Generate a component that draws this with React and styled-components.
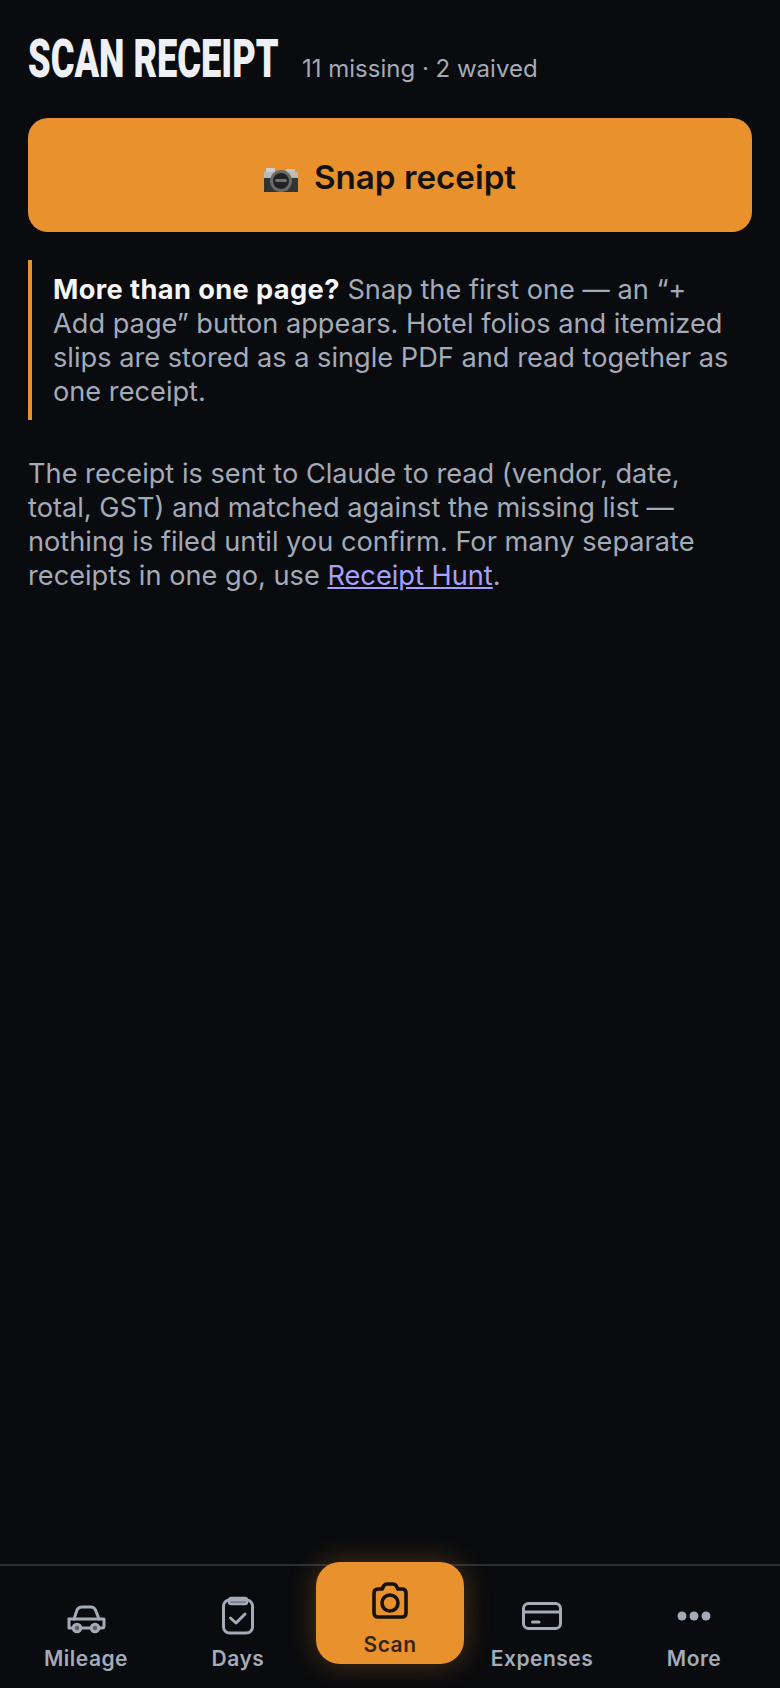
import React from "react";
import styled, { createGlobalStyle } from "styled-components";

const GlobalStyle = createGlobalStyle`
  html, body {
    margin: 0;
    padding: 0;
    background: #0a0b0e;
  }
  * {
    box-sizing: border-box;
  }
`;

const Page = styled.div`
  width: 780px;
  height: 1688px;
  display: flex;
  flex-direction: column;
  background: #0a0b0e;
  font-family: Inter, "Liberation Sans", sans-serif;
  color: #a3aab8;
  overflow: hidden;
`;

const Main = styled.main`
  flex: 1;
  padding: 28px 28px 0;
`;

const Header = styled.header`
  display: flex;
  align-items: baseline;
  gap: 24px;
  margin-bottom: 28px;
`;

// no condensed face is installed, so the title is squeezed sideways
const Title = styled.h1`
  margin: 0;
  width: 250px;
  font-family: Roboto, "Liberation Sans", sans-serif;
  font-size: 54px;
  line-height: 62px;
  font-weight: 900;
  color: #eef0f5;
  white-space: nowrap;
  transform: scaleX(0.67);
  transform-origin: left center;
`;

const Meta = styled.span`
  font-size: 24px;
  color: #a3aab8;
`;

const SnapButton = styled.button`
  width: 100%;
  height: 114px;
  display: flex;
  align-items: center;
  justify-content: center;
  gap: 16px;
  padding: 4px 0 0;
  border: none;
  border-radius: 20px;
  background: #e8912d;
  color: #14120f;
  font-family: inherit;
  font-size: 33.2px;
  font-weight: 600;
`;

const EmojiSvg = styled.svg`
  margin-top: 5px;
`;

const Note = styled.p`
  margin: 28px 0 0;
  padding: 13px 8px 11px 21px;
  border-left: 4px solid #e8912d;
  font-size: 27.2px;
  line-height: 34px;
`;

const Strong = styled.strong`
  color: #f5f6f8;
  font-weight: 700;
  letter-spacing: 0.4px;
`;

const Body = styled.p`
  margin: 37px 0 0;
  padding-right: 8px;
  font-size: 27.2px;
  line-height: 34px;
`;

const Link = styled.a`
  color: #a5a0ff;
  text-decoration: underline;
`;

const Nav = styled.nav`
  height: 124px;
  flex: none;
  display: grid;
  grid-template-columns: repeat(5, 1fr);
  padding: 0 10px;
  border-top: 2px solid #2a2e36;
`;

const NavItem = styled.a`
  display: flex;
  flex-direction: column;
  align-items: center;
  height: ${(p) => (p.$active ? "102px" : "auto")};
  margin: ${(p) => (p.$active ? "-4px 2px 0" : "0")};
  padding-top: ${(p) => (p.$active ? "16px" : "28px")};
  border-radius: 24px;
  background: ${(p) => (p.$active ? "#e8912d" : "transparent")};
  box-shadow: ${(p) => (p.$active ? "0 0 28px rgba(232, 145, 45, 0.3)" : "none")};
  color: ${(p) => (p.$active ? "#14120f" : "#a3aab8")};
`;

const IconBox = styled.span`
  width: 44px;
  height: 44px;
  display: flex;
  align-items: center;
  justify-content: center;
`;

const NavLabel = styled.span`
  margin-top: ${(p) => (p.$active ? "10px" : "8px")};
  font-size: 21px;
  line-height: 26px;
  font-weight: 600;
  letter-spacing: 0.5px;
  opacity: ${(p) => (p.$active ? 0.85 : 1)};
`;

const CameraEmoji = () => (
  <EmojiSvg width="34" height="24" viewBox="0 0 34 24">
    <rect x="2" y="0" width="9" height="5" fill="#cfcfcf" />
    <rect x="22" y="1" width="9" height="4" fill="#c4c4c4" />
    <rect x="0" y="4" width="34" height="7" fill="#b9b9b9" />
    <rect x="0" y="10" width="34" height="14" fill="#333333" />
    <circle cx="17" cy="13" r="11" fill="#6a6a6a" />
    <circle cx="17" cy="13" r="8" fill="#222222" />
    <rect x="11" y="11" width="12" height="3" rx="1.5" fill="#707070" />
    <circle cx="30" cy="6" r="1.3" fill="#f0c23a" />
  </EmojiSvg>
);

const CarIcon = () => (
  <svg width="40" height="36" viewBox="0 0 40 36" fill="none" stroke="currentColor" strokeWidth="3" strokeLinejoin="round" strokeLinecap="round">
    <path d="M8 21 L11 12 Q12.5 9 16 9 H25 Q28 9 29.5 12 L33 21" />
    <path d="M3 21 H38 V28 Q38 30 36 30 H33" />
    <path d="M3 21 V30 H7" />
    <path d="M15 30 H25" />
    <circle cx="11" cy="30" r="3.8" fill="currentColor" fillOpacity="0.55" />
    <circle cx="29" cy="30" r="3.8" fill="currentColor" fillOpacity="0.55" />
  </svg>
);

const ClipIcon = () => (
  <svg width="34" height="40" viewBox="0 0 34 40" fill="none" stroke="currentColor" strokeWidth="3" strokeLinecap="round" strokeLinejoin="round">
    <rect x="2.5" y="4" width="29" height="33" rx="6" />
    <rect x="8" y="2" width="18" height="6" rx="2" fill="currentColor" fillOpacity="0.6" strokeWidth="2.4" />
    <path d="M9.5 22 L15 27 L24 18" />
  </svg>
);

const ScanIcon = () => (
  <svg width="36" height="37" viewBox="0 0 36 37" fill="none" stroke="currentColor" strokeWidth="3.6" strokeLinejoin="round">
    <path d="M6 7 H10 L12 3.5 Q13 2 15 2 H21 Q23 2 24 3.5 L26 7 H30 Q34 7 34 11 V31 Q34 35 30 35 H6 Q2 35 2 31 V11 Q2 7 6 7 Z" />
    <circle cx="18" cy="21" r="8" />
  </svg>
);

const CardIcon = () => (
  <svg width="40" height="28" viewBox="0 0 40 28" fill="none" stroke="currentColor" strokeWidth="3" strokeLinecap="round">
    <rect x="1.5" y="1.5" width="37" height="25" rx="5" />
    <path d="M1.5 10 H38.5" />
    <path d="M10.5 20 H17" />
  </svg>
);

const DotsIcon = () => (
  <svg width="34" height="10" viewBox="0 0 34 10" fill="currentColor">
    <circle cx="5" cy="5" r="4.5" />
    <circle cx="17" cy="5" r="4.5" />
    <circle cx="29" cy="5" r="4.5" />
  </svg>
);

const tabs = [
  { label: "Mileage", icon: <CarIcon /> },
  { label: "Days", icon: <ClipIcon /> },
  { label: "Scan", icon: <ScanIcon />, active: true },
  { label: "Expenses", icon: <CardIcon /> },
  { label: "More", icon: <DotsIcon /> },
];

const App = () => {
  return (
    <Page>
      <GlobalStyle />
      <Main>
        <Header>
          <Title>SCAN RECEIPT</Title>
          <Meta>11 missing · 2 waived</Meta>
        </Header>
        <SnapButton>
          <CameraEmoji />
          Snap receipt
        </SnapButton>
        <Note>
          <Strong>More than one page?</Strong> Snap the first one — an “+ Add
          page” button appears. Hotel folios and itemized slips are stored as a
          single PDF and read together as one receipt.
        </Note>
        <Body>
          The receipt is sent to Claude to read (vendor, date, total, GST) and
          matched against the missing list — nothing is filed until you confirm.
          For many separate receipts in one go, use <Link href="#">Receipt Hunt</Link>.
        </Body>
      </Main>
      <Nav>
        {tabs.map((t) => (
          <NavItem key={t.label} $active={t.active}>
            <IconBox>{t.icon}</IconBox>
            <NavLabel $active={t.active}>{t.label}</NavLabel>
          </NavItem>
        ))}
      </Nav>
    </Page>
  );
};

export default App;
